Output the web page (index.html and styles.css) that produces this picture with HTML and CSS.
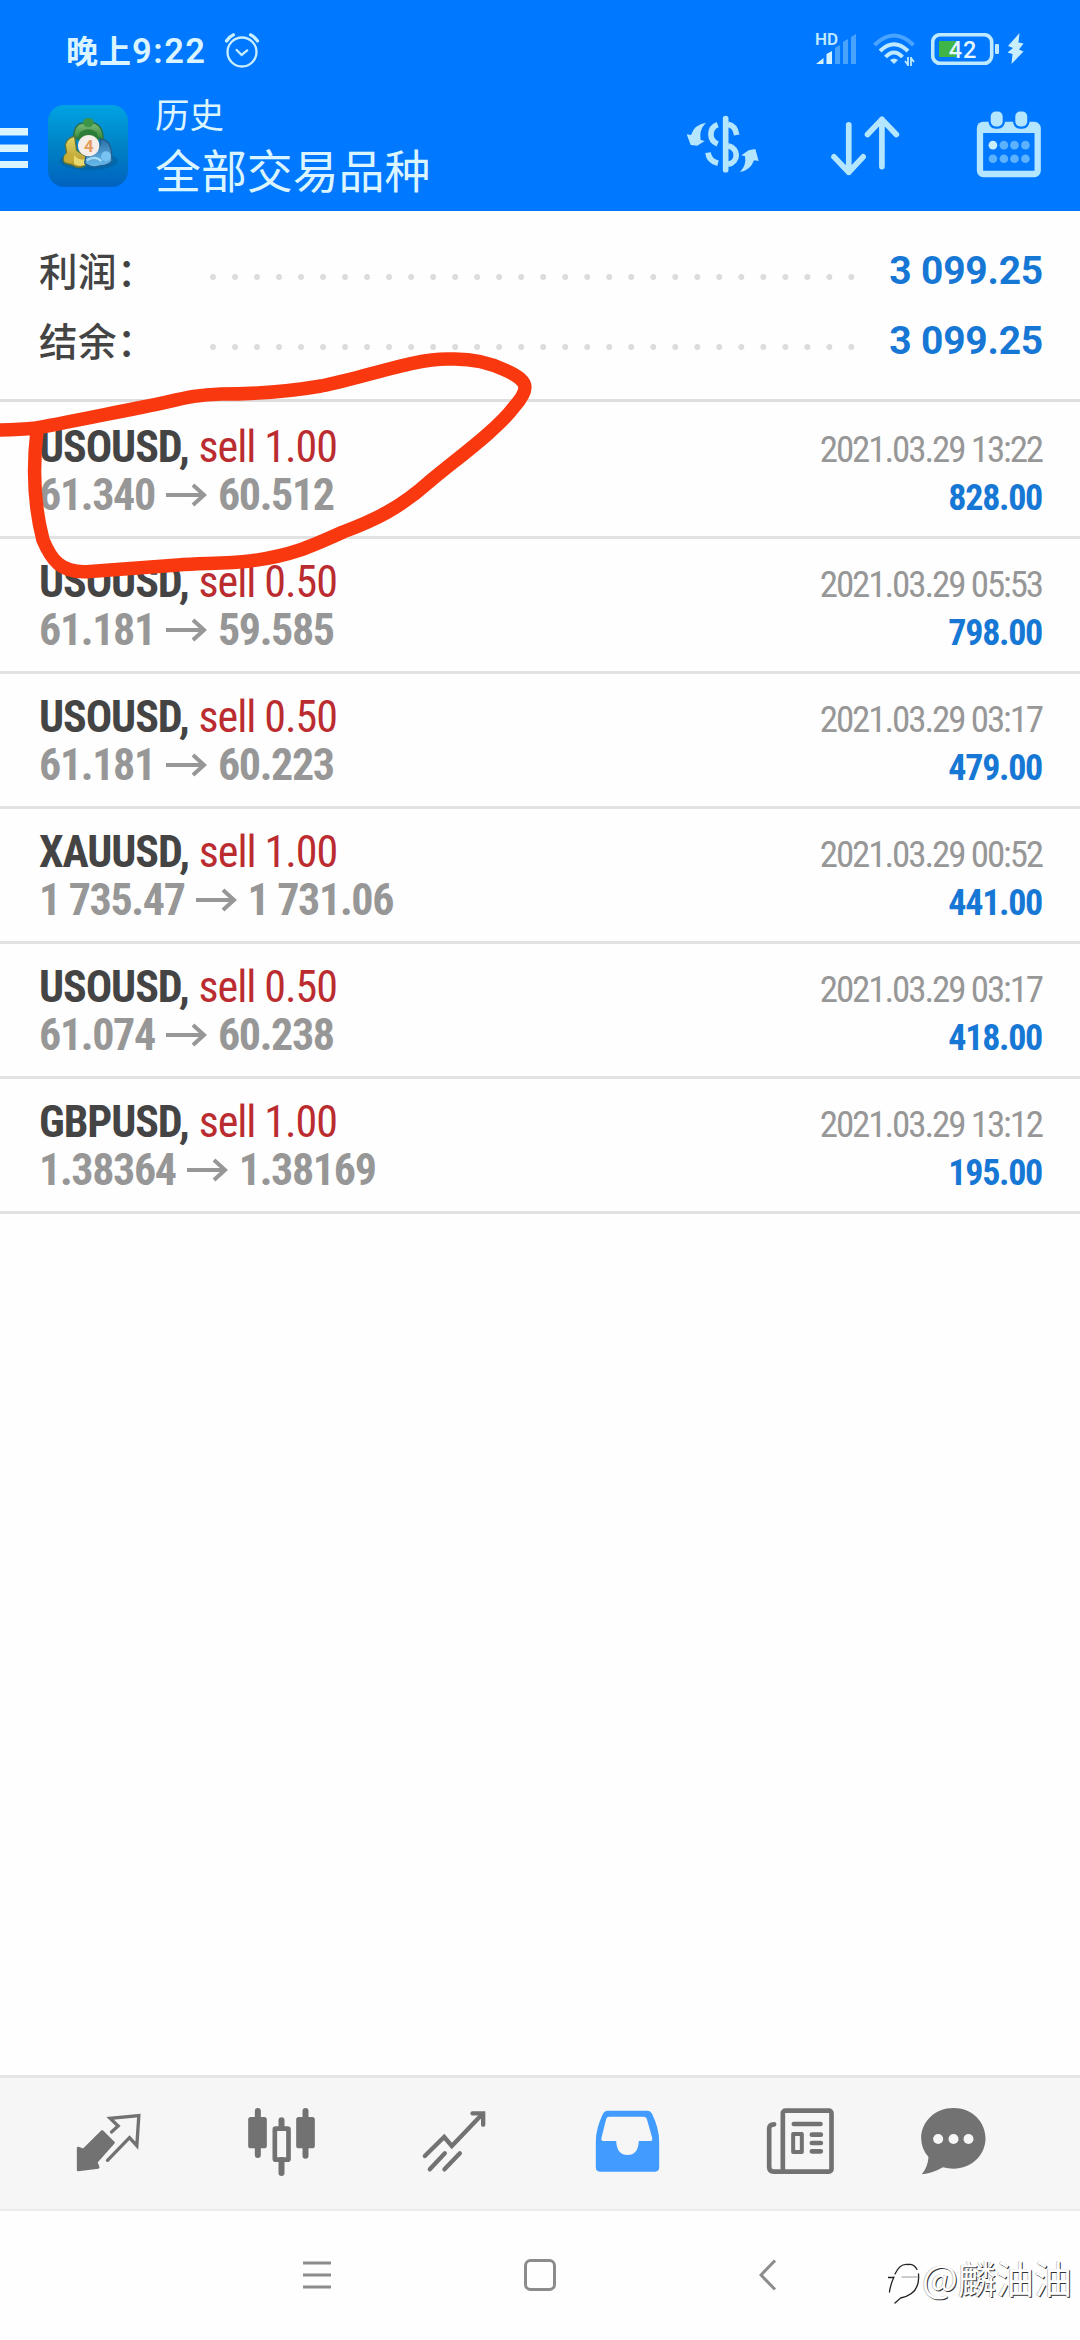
FILE: index.html
```html
<!DOCTYPE html>
<html lang="zh-CN">
<head>
<meta charset="utf-8">
<title>历史</title>
<link rel="stylesheet" href="styles.css">
</head>
<body>
<div class="screen">
  <header class="header">
    <div class="status">
      <div class="status-left">
        <span class="clock">晚上<b>9:22</b></span>
        <svg class="alarm" viewBox="0 0 36 36" fill="none" stroke="#c9efff" stroke-width="2.3" stroke-linecap="round"><circle cx="18" cy="20" r="14.5"/><path d="M12.6 18l5 5 5.6-4.6"/><path stroke-width="3.2" d="M2.5 9q3-4.5 7-6.200M33.500 9q-3-4.500-7-6.200"/></svg>
      </div>
      <div class="status-right">
        <div class="signal"><span class="hd">HD</span>
          <svg viewBox="0 0 42 34"><path fill="#d5f3ff" d="M1 31l7.500-6v6zM11.500 21l5.500-3v13h-5.500z"/><path fill="#4aa4ff" d="M20 15l5-3v19h-5zM28 9l5-3v25h-5zM36 4l5-3v30h-5z"/></svg>
        </div>
        <svg class="wifi" viewBox="0 0 42 34" fill="none" stroke-width="4"><path stroke="#4aa4ff" d="M1.500 12Q21-7 40.500 12"/><path stroke="#bfe9ff" d="M7 18Q21 4.500 35 18M12.500 24Q21 15 29.500 24"/><path fill="#bfe9ff" d="M17 27q4-3 8 0l-4 4z"/><path stroke="#bfe9ff" stroke-width="1.800" d="M35 24v9M35 32l-3-4M38 33v-9M38 25l3 4"/></svg>
        <svg class="battery" viewBox="0 0 70 33"><rect x="1.700" y="1.700" width="59" height="28.600" rx="7.500" fill="none" stroke="#bfe9ff" stroke-width="3.600"/><rect x="8" y="8" width="17" height="16" fill="#3fb548"/><rect x="64" y="11" width="4" height="10" rx="1" fill="#bfe9ff"/><text x="32" y="24.500" text-anchor="middle">42</text></svg>
        <svg class="bolt" viewBox="0 0 17 32"><path fill="#c9efff" d="M12.500 0L1 13l5 2-5.500 4.500 5 1.500L4.500 31 16.500 18.500l-4.500-2 4.500-6-5-1z"/></svg>
      </div>
    </div>
    <div class="bar">
      <svg class="burger" viewBox="0 0 28 40" fill="#daf5ff"><rect width="28" height="7.500"/><rect y="16.500" width="28" height="7.500"/><rect y="33" width="28" height="7.500"/></svg>
      <svg class="app" viewBox="0 0 240 246">
        <defs>
          <linearGradient id="bg" x1="0" y1="0" x2="0" y2="1"><stop offset="0" stop-color="#00a3e2"/><stop offset=".55" stop-color="#007fc4"/><stop offset="1" stop-color="#0062c0"/></linearGradient>
          <linearGradient id="gr" x1="0" y1="0" x2="0" y2="1"><stop offset="0" stop-color="#8fc98a"/><stop offset="1" stop-color="#2f8435"/></linearGradient>
          <linearGradient id="ye" x1="0" y1="0" x2="0" y2="1"><stop offset="0" stop-color="#e2d865"/><stop offset="1" stop-color="#b3942a"/></linearGradient>
          <linearGradient id="bl" x1="0" y1="0" x2="0" y2="1"><stop offset="0" stop-color="#2c74a9"/><stop offset="1" stop-color="#6cbcf0"/></linearGradient>
        </defs>
        <rect width="240" height="246" rx="48" fill="url(#bg)"/>
        <ellipse cx="122" cy="168" rx="88" ry="28" fill="#005a93" opacity=".5"/>
        <path d="M76 104q0-48 30-50 14-24 29 0 30 4 31 52-18-15-46-12-26-2-44 10z" fill="url(#gr)" stroke="#2a6f45" stroke-width="4"/>
        <path d="M96 82q25-18 50 0l8 24H86z" fill="#2c7d37"/><ellipse cx="121" cy="53" rx="16" ry="14" fill="#3d9648"/>
        <path d="M80 94q-24 4-28 26l4 26q-18 14-6 28 14 4 22 6 18 14 40 2l4-26-30-20z" fill="url(#ye)" stroke="#56743c" stroke-width="4"/>
        <circle cx="64" cy="158" r="16" fill="#c8ad39"/><path d="M78 150q16 18 32 12v18q-20 6-32-4z" fill="#ead96e"/>
        <path d="M156 104q28-4 34 34l2 30q-12 14-34 14-26 10-48-8l4-20q34 0 44-40z" fill="url(#bl)" stroke="#245f91" stroke-width="4"/>
        <circle cx="174" cy="154" r="15" fill="#79c3f3"/><path d="M116 166q26-16 44 2" fill="none" stroke="#a6dcf6" stroke-width="7"/>
        <circle cx="122" cy="122" r="32" fill="#f5eee8"/>
        <text x="122" y="140" text-anchor="middle" class="four">4</text>
      </svg>
      <div class="titles"><div class="t1">历史</div><div class="t2">全部交易品种</div></div>
      <svg class="act dollar" viewBox="136 346 222 174" fill="none" stroke="#b5e6ff"><path stroke-width="17" stroke-linecap="round" d="M255 357v153"/><path stroke-width="17" d="M231 375c-26 10-28 46 0 58M202 459c2 18 14 28 30 32"/><path stroke-width="17" d="M262 374q22 4 26 32M262 438c34 8 32 50 0 56"/><path fill="#b5e6ff" stroke="none" d="M138 404l13 2q10-32 45-37-22 22-16 52l12 3-22 14-20-2zM354 484l-14-2q-10 30-42 35 20-20 15-47l-11-3 22-15 20-4z"/></svg>
      <svg class="act sort" viewBox="573 345 206 182" fill="none" stroke="#b5e6ff" stroke-width="17" stroke-linecap="round" stroke-linejoin="round"><path d="M626 374v142M582 470l44 46 43-46M725 499V358M682 403l43-45 43 45"/></svg>
      <svg class="act cal" viewBox="1006 334 196 202"><rect x="1018" y="376" width="174" height="148" rx="10" fill="none" stroke="#b5e6ff" stroke-width="19"/><path fill="#b5e6ff" d="M1012 372h180v28h-180z"/><rect x="1047" y="332" width="43" height="52" rx="18" fill="#b5e6ff" stroke="#0078ff" stroke-width="7"/><rect x="1121" y="332" width="43" height="52" rx="18" fill="#b5e6ff" stroke="#0078ff" stroke-width="7"/><g fill="#5cb2ff"><circle cx="1057" cy="437" r="13" fill="#c9efff"/><circle cx="1090" cy="437" r="13"/><circle cx="1122" cy="437" r="13"/><circle cx="1155" cy="437" r="13"/><circle cx="1057" cy="478" r="13"/><circle cx="1090" cy="478" r="13"/><circle cx="1122" cy="478" r="13"/><circle cx="1155" cy="478" r="13"/></g></svg>
    </div>
  </header>

  <section class="summary">
    <div class="sum"><span class="label">利润：</span><i class="dots"></i><span class="total">3 099.25</span></div>
    <div class="sum"><span class="label">结余：</span><i class="dots"></i><span class="total">3 099.25</span></div>
  </section>

  <main class="list">
    <article class="deal"><div class="line"><span class="sym">USOUSD,</span><span class="side">sell 1.00</span><time>2021.03.29 13:22</time></div><div class="line"><span class="px">61.340</span><svg class="arr" viewBox="0 0 42 24"><path d="M0 12h38M27 2l11 10-11 10"/></svg><span class="px">60.512</span><span class="profit">828.00</span></div></article>
    <article class="deal"><div class="line"><span class="sym">USOUSD,</span><span class="side">sell 0.50</span><time>2021.03.29 05:53</time></div><div class="line"><span class="px">61.181</span><svg class="arr" viewBox="0 0 42 24"><path d="M0 12h38M27 2l11 10-11 10"/></svg><span class="px">59.585</span><span class="profit">798.00</span></div></article>
    <article class="deal"><div class="line"><span class="sym">USOUSD,</span><span class="side">sell 0.50</span><time>2021.03.29 03:17</time></div><div class="line"><span class="px">61.181</span><svg class="arr" viewBox="0 0 42 24"><path d="M0 12h38M27 2l11 10-11 10"/></svg><span class="px">60.223</span><span class="profit">479.00</span></div></article>
    <article class="deal"><div class="line"><span class="sym">XAUUSD,</span><span class="side">sell 1.00</span><time>2021.03.29 00:52</time></div><div class="line"><span class="px">1 735.47</span><svg class="arr" viewBox="0 0 42 24"><path d="M0 12h38M27 2l11 10-11 10"/></svg><span class="px">1 731.06</span><span class="profit">441.00</span></div></article>
    <article class="deal"><div class="line"><span class="sym">USOUSD,</span><span class="side">sell 0.50</span><time>2021.03.29 03:17</time></div><div class="line"><span class="px">61.074</span><svg class="arr" viewBox="0 0 42 24"><path d="M0 12h38M27 2l11 10-11 10"/></svg><span class="px">60.238</span><span class="profit">418.00</span></div></article>
    <article class="deal"><div class="line"><span class="sym">GBPUSD,</span><span class="side">sell 1.00</span><time>2021.03.29 13:12</time></div><div class="line"><span class="px">1.38364</span><svg class="arr" viewBox="0 0 42 24"><path d="M0 12h38M27 2l11 10-11 10"/></svg><span class="px">1.38169</span><span class="profit">195.00</span></div></article>
  </main>

  <nav class="tabs">
    <svg viewBox="215 138 200 216" fill="none" stroke="#727272"><path stroke-width="10" stroke-linejoin="miter" stroke-linecap="round" d="M324 216l20-18-24-23 86-8-6 90-22-24-66 68"/><path fill="#727272" stroke-width="8" stroke-linejoin="round" d="M296 214l34 34-52 58 6 16-60 8v-66l16 6z"/></svg>
    <svg viewBox="716 138 200 216" fill="none" stroke="#727272" stroke-width="18" stroke-linecap="round"><path d="M745 153v132M888 153v134M816 181v20M816 300v39"/><rect x="722" y="177" width="44" height="82" stroke-width="12" rx="2" fill="#727272"/><rect x="866" y="177" width="44" height="82" stroke-width="12" rx="2" fill="#727272"/><rect x="796" y="206" width="41" height="93" stroke-width="14" rx="3"/></svg>
    <svg viewBox="1220 138 200 216" fill="none" stroke="#727272" stroke-width="13" stroke-linecap="round"><path d="M1231 288l58-57 23 27 86-90M1246 328l45-48M1290 328l46-48"/><path d="M1374 160h32v34"/></svg>
    <svg viewBox="155 138 200 216"><path fill="#429bff" fill-rule="evenodd" d="M196 152h118q10 0 15 10 21 44 21 82v78q0 13-12 13H172q-12 0-12-13v-78q0-38 21-82 5-10 15-10zM200 170q-7 0-9 7l-14 56q-2 10 6 10h38q2 42 34 42t34-42h34q8 0 6-10l-16-56q-2-7-10-7z"/></svg>
    <svg viewBox="656 138 206 216" fill="none" stroke="#727272" stroke-width="14" stroke-linecap="round" stroke-linejoin="round"><rect x="706" y="152" width="146" height="183" rx="8"/><path d="M680 193q-15 0-15 14v114q0 14 14 14h30"/><path d="M739 192h80M793 224h27M793 249h27M793 274h27"/><rect x="737" y="222" width="26" height="54" stroke-width="12"/></svg>
    <svg viewBox="1100 138 200 216"><path fill="#727272" d="M1200 144c54 0 96 40 96 91s-42 91-96 91q-16 0-32-4-30 18-63 21 18-22 20-52-22-24-22-56c0-51 43-91 97-91z"/><g fill="#f7f7f7"><circle cx="1154" cy="237" r="15"/><circle cx="1200" cy="237" r="15"/><circle cx="1245" cy="237" r="15"/></g></svg>
  </nav>

  <footer class="system">
    <svg class="k1" viewBox="0 0 30 32"><path d="M1 4h28M1 16h28M1 28h28"/></svg>
    <svg class="k2" viewBox="0 0 32 32"><rect x="1.500" y="1.500" width="29" height="29" rx="5"/></svg>
    <svg class="k3" viewBox="0 0 18 32"><path d="M16 1.500L2 16l14 14.500"/></svg>
  </footer>

  <div class="mark">
    <svg viewBox="0 0 34 44" fill="none" stroke-linecap="round"><g stroke="#222" stroke-width="1.300"><path d="M1.500 32q1-8 4.500-15M0 17.500h5.500M7 14Q12 3 20 4.500q6-1 9 5M30.500 14q2 20-18 24L7 43"/></g><path stroke="#999" stroke-width="1.200" d="M14 17h16"/></svg><span>@麟油油</span>
  </div>
  <svg class="scribble" viewBox="0 0 540 600"><path d="M-8 430Q18 430 36 428C75 421 107 414 143 407S190 395 221 394Q275 394 321 386C370 376 415 358 450 359Q480 358 505 370C527 380 532 387 514 407C497 430 455 460 429 482C400 508 375 520 343 532C310 547 290 556 250 561C225 564 200 563 178 565L90 571.500C60 574 51 559 43 540Q30 490 37 431"/></svg>
</div>
</body>
</html>
```
FILE: styles.css
```css
* { box-sizing: border-box; }
body { margin: 0; background: #fefefe; font-family: Roboto, "Noto Sans CJK SC", sans-serif; }
svg { display: block; flex: none; }
.screen { position: relative; width: 1080px; height: 2340px; overflow: hidden; display: flex; flex-direction: column; }

.header { height: 211px; background: #0078ff; display: flex; flex-direction: column; }
.status { height: 98px; display: flex; justify-content: space-between; padding: 0 56px 0 66px; }
.status-left, .status-right { display: flex; }
.status-left { padding-top: 29px; gap: 17px; }
.clock { width: 141px; font-size: 32px; line-height: 40px; font-weight: 700; color: #daf5ff; white-space: nowrap; font-family: "Noto Sans CJK SC", sans-serif; letter-spacing: 1px; }
.clock b { font: 600 34.500px/40px Roboto, sans-serif; letter-spacing: 1.500px; }
.alarm { width: 36px; height: 36px; margin-top: 3px; }
.status-right { padding-top: 33px; }
.signal { position: relative; width: 42px; height: 34px; margin-right: 16px; }
.signal svg { width: 42px; height: 34px; }
.hd { position: absolute; left: 0; top: -2px; font: 600 17px/17px Roboto, sans-serif; color: #bfe9ff; }
.wifi { width: 42px; height: 34px; margin-right: 16px; }
.battery { width: 70px; height: 33px; margin-right: 6px; }
.battery text { font: 500 23.500px Roboto, sans-serif; fill: #e4f7ff; letter-spacing: 1px; }
.bolt { width: 17px; height: 32px; }

.bar { flex: 1; display: flex; align-items: flex-start; }
.burger { width: 28px; height: 40px; margin-top: 30px; }
.app { width: 80px; height: 82px; margin: 7px 0 0 20px; }
.four { font: 700 50px Roboto, sans-serif; fill: #e59a5c; }
.titles { margin-left: 27px; width: 501px; color: #daf5ff; font-family: "Noto Sans CJK SC", sans-serif; }
.t1 { font-size: 34.500px; line-height: 36px; margin-top: -3px; }
.t2 { font-size: 45.900px; line-height: 50px; margin-top: 12px; }
.act { margin-top: 17px; }
.dollar { width: 74px; height: 58px; margin-left: 30px; }
.sort { width: 69px; height: 61px; margin-left: 71px; }
.cal { width: 65px; height: 67px; margin: 13px 0 0 76px; }

.summary { height: 191px; padding: 25px 37px 0 39px; border-bottom: 3px solid #dedede; }
.sum { height: 70px; display: flex; align-items: center; }
.label { width: 171px; margin-top: -4px; font-family: "Noto Sans CJK SC", sans-serif; font-size: 38.500px; line-height: 60px; font-weight: 500; color: #444; letter-spacing: .500px; }
.dots { width: 646px; height: 6px; margin: 12px 0 0; background: radial-gradient(circle at 3px 3px, #dcdcdc 2.700px, transparent 3.300px) 0 0 / 22.020px 6px repeat-x; }
.total { margin-left: auto; font-size: 39px; font-weight: 700; letter-spacing: -.200px; color: #1678d4; }

.list { flex: 1; font-family: "Roboto Condensed", sans-serif; }
.deal { height: 135px; padding: 19px 38px 0 39px; border-bottom: 3px solid #e2e2e2; }
.deal:first-child { height: 137px; padding-top: 21px; }
.line { height: 48px; line-height: 48px; font-size: 44px; display: flex; align-items: baseline; white-space: nowrap; }
.sym { font-weight: 700; color: #444; letter-spacing: -1.100px; }
.side { margin-left: 10px; color: #bb2c30; letter-spacing: -1.050px; }
.px { font-weight: 700; color: #979797; letter-spacing: -1.350px; }
.arr { width: 42px; height: 24px; margin: 0 10px 0 11px; align-self: center; fill: none; stroke: #979797; stroke-width: 4; }
time { margin-left: auto; font-size: 37px; color: #979797; letter-spacing: -2.100px; }
.profit { margin-left: auto; font-size: 36px; font-weight: 700; color: #1678d4; letter-spacing: -1.300px; }

.tabs { height: 136px; background: #f6f6f6; border-top: 3px solid #e6e6e6; border-bottom: 2px solid #ebebeb; padding: 28px 0 0 22px; display: grid; grid-template-columns: repeat(5, 173px) 132px; justify-items: center; }
.tabs svg { width: 69px; height: 72px; }
.tabs svg:nth-child(5) { width: 71px; }

.system { height: 129px; display: flex; padding: 48px 0 0 302px; fill: none; stroke: #8c8c8c; stroke-width: 3; }
.k1 { width: 30px; height: 32px; }
.k2 { width: 32px; height: 32px; margin-left: 192px; }
.k3 { width: 18px; height: 32px; margin-left: 203px; }

.mark { position: absolute; left: 888px; top: 2250px; display: flex; font: 38px/56px "Noto Sans CJK SC", sans-serif; color: #fff; white-space: nowrap; text-shadow: 1px .700px 0 #333, -.800px -.400px 0 #bbb; }
.mark svg { width: 34px; height: 44px; margin-top: 10px; }
.mark span { margin-top: -1px; }
.scribble { position: absolute; left: 0; top: 0; width: 540px; height: 600px; fill: none; stroke: #f93810; stroke-width: 13.500; stroke-linejoin: round; }
```
